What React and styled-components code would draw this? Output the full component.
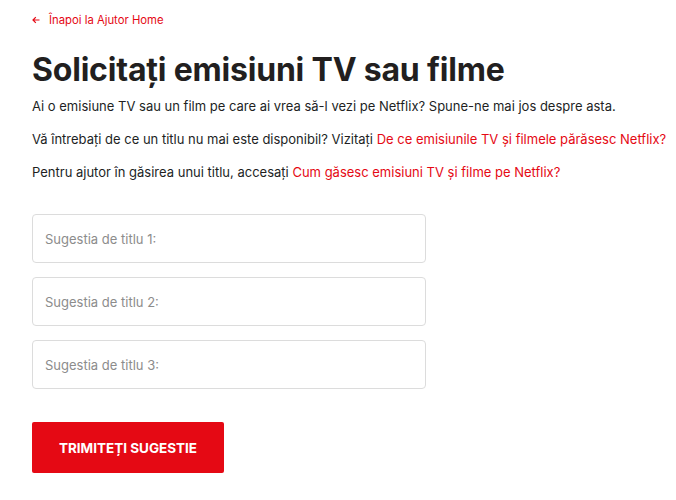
import React from "react";
import styled, { createGlobalStyle } from "styled-components";

const Global = createGlobalStyle`
  html, body { margin: 0; padding: 0; background: #fff; }
  body { font-family: Inter, "Noto Sans", sans-serif; color: #221f1f; }
  * { box-sizing: border-box; }
`;

const Page = styled.div`
  padding: 8px 0 0 32px;
  width: 676px;
`;

const BackLink = styled.a`
  display: inline-flex;
  align-items: center;
  gap: 9px;
  color: #e50914;
  font-size: 11.3px;
  text-decoration: none;
  line-height: 16px;
`;

const Title = styled.h1`
  margin: 22px 0 0 0;
  font-size: 32px;
  font-weight: 700;
  line-height: 40px;
  letter-spacing: -0.2px;
  color: #221f1f;
`;

const Para = styled.p`
  margin: ${(p) => (p.$first ? "7px" : "15px")} 0 0 0;
  font-size: 13px;
  line-height: 18px;
  color: #221f1f;
`;

const Link = styled.a`
  color: #e50914;
  text-decoration: none;
`;

const Form = styled.form`
  margin-top: 33px;
  display: flex;
  flex-direction: column;
  gap: 14px;
  width: 394px;
`;

const Input = styled.input`
  display: block;
  height: 49px;
  width: 100%;
  border: 1px solid #dcdcdc;
  border-radius: 4px;
  padding: 0 12px;
  font-family: inherit;
  font-size: 13px;
  color: #221f1f;
  outline: none;
  &::placeholder { color: #8c8c8c; }
`;

const Button = styled.button`
  display: block;
  margin-top: 33px;
  width: 192px;
  height: 51px;
  background: #e50914;
  color: #fff;
  border: none;
  border-radius: 2px;
  font-family: inherit;
  font-size: 13.5px;
  font-weight: 700;
  text-transform: uppercase;
  cursor: pointer;
`;

const Arrow = () => (
  <svg width="8" height="8" viewBox="0 0 8 8" fill="none" stroke="#e50914" strokeWidth="1.2">
    <path d="M7.5 4H1M3.8 1.2L1 4l2.8 2.8" />
  </svg>
);

export default function App() {
  return (
    <>
      <Global />
      <Page>
        <BackLink href="#">
          <Arrow />
          Înapoi la Ajutor Home
        </BackLink>
        <Title>Solicitați emisiuni TV sau filme</Title>
        <Para $first>
          Ai o emisiune TV sau un film pe care ai vrea să-l vezi pe Netflix? Spune-ne mai jos despre asta.
        </Para>
        <Para>
          Vă întrebați de ce un titlu nu mai este disponibil? Vizitați{" "}
          <Link href="#">De ce emisiunile TV și filmele părăsesc Netflix?</Link>
        </Para>
        <Para>
          Pentru ajutor în găsirea unui titlu, accesați{" "}
          <Link href="#">Cum găsesc emisiuni TV și filme pe Netflix?</Link>
        </Para>
        <Form onSubmit={(e) => e.preventDefault()}>
          <Input placeholder="Sugestia de titlu 1:" />
          <Input placeholder="Sugestia de titlu 2:" />
          <Input placeholder="Sugestia de titlu 3:" />
        </Form>
        <Button type="button">Trimiteți sugestie</Button>
      </Page>
    </>
  );
}
